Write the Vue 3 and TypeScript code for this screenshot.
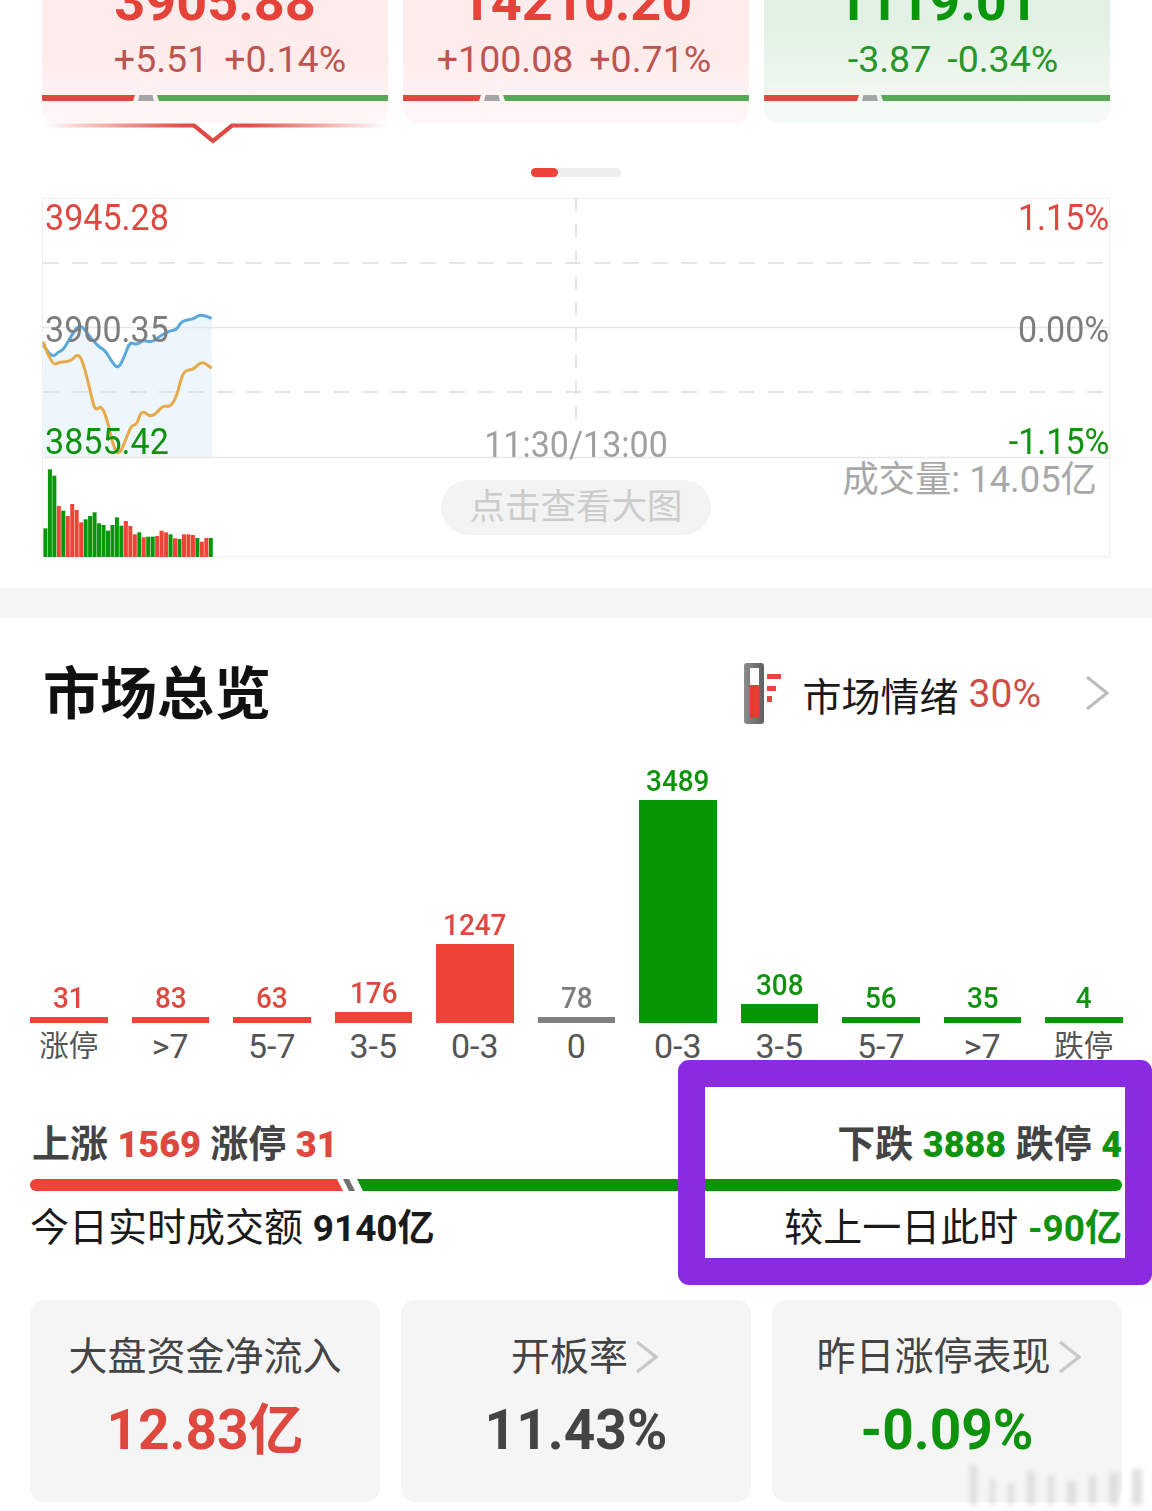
<script setup lang="ts">
interface IndexCard { value: string; change: string; pct: string; tone: string; red: number; shift: number; active?: boolean }
interface MarketBar { value: string; label: string; height: number; tone: string }
interface Tile { title: string; value: string; tone: string; arrow: boolean; shift: number }

const cards: IndexCard[] = [
  { value: '3905.88', change: '+5.51', pct: '+0.14%', tone: 'up', red: 93, shift: 30, active: true },
  { value: '14210.20', change: '+100.08', pct: '+0.71%', tone: 'up', red: 78, shift: -4 },
  { value: '1119.01', change: '-3.87', pct: '-0.34%', tone: 'down', red: 95, shift: 32 },
]

const marketBars: MarketBar[] = [
  { value: '31', label: '涨停', height: 6, tone: 'up' },
  { value: '83', label: '>7', height: 6, tone: 'up' },
  { value: '63', label: '5-7', height: 6, tone: 'up' },
  { value: '176', label: '3-5', height: 11, tone: 'up' },
  { value: '1247', label: '0-3', height: 79, tone: 'up' },
  { value: '78', label: '0', height: 6, tone: 'flat' },
  { value: '3489', label: '0-3', height: 223, tone: 'down' },
  { value: '308', label: '3-5', height: 19, tone: 'down' },
  { value: '56', label: '5-7', height: 6, tone: 'down' },
  { value: '35', label: '>7', height: 6, tone: 'down' },
  { value: '4', label: '跌停', height: 6, tone: 'down' },
]

const tiles: Tile[] = [
  { title: '大盘资金净流入', value: '12.83亿', tone: 'up', arrow: false, shift: 0 },
  { title: '开板率', value: '11.43%', tone: 'dark', arrow: true, shift: 19 },
  { title: '昨日涨停表现', value: '-0.09%', tone: 'down', arrow: true, shift: 5 },
]

const toPage = (p: number[]): number[] => [30 + p[0] / 3, 290 + p[1] / 3]

const bluePts = [[40,165],[65,205],[85,185],[100,180],[125,135],[150,100],[175,135],[205,170],[225,180],[245,215],[265,238],[285,195],[300,155],[320,165],[340,150],[365,158],[395,135],[420,122],[440,120],[455,92],[490,88],[510,72],[545,85]].map(toPage)
const orangePts = [[40,155],[65,228],[90,215],[120,215],[145,190],[160,220],[180,300],[195,365],[215,345],[235,400],[250,470],[268,498],[290,440],[305,405],[320,405],[335,358],[365,385],[400,345],[420,352],[440,320],[460,240],[490,240],[515,212],[545,235]].map(toPage)

function smooth(pts: number[][]): string {
  let d = `M${pts[0][0].toFixed(1)} ${pts[0][1].toFixed(1)}`
  for (let i = 1; i < pts.length - 1; i++) {
    const mx = (pts[i][0] + pts[i + 1][0]) / 2
    const my = (pts[i][1] + pts[i + 1][1]) / 2
    d += `Q${pts[i][0].toFixed(1)} ${pts[i][1].toFixed(1)} ${mx.toFixed(1)} ${my.toFixed(1)}`
  }
  const last = pts[pts.length - 1]
  return `${d}L${last[0].toFixed(1)} ${last[1].toFixed(1)}`
}

const blue = smooth(bluePts)
const orange = smooth(orangePts)
const blueArea = `${blue}L212 457L43 457Z`

const volTops: [number, string][] = [[715,'g'],[538,'g'],[557,'g'],[648,'r'],[662,'g'],[678,'r'],[642,'r'],[660,'r'],[697,'r'],[688,'g'],[678,'g'],[667,'g'],[700,'g'],[705,'g'],[722,'g'],[705,'g'],[682,'g'],[707,'g'],[693,'r'],[708,'r'],[733,'r'],[727,'g'],[742,'r'],[740,'g'],[740,'g'],[738,'r'],[722,'r'],[727,'r'],[733,'g'],[745,'r'],[747,'g'],[733,'r'],[733,'r'],[735,'r'],[744,'g'],[755,'r'],[744,'r'],[744,'g']]
const volumes = volTops.map(([top, c], i) => ({
  x: 43.4 + i * 4.47,
  y: 290 + top / 3,
  h: 557 - (290 + top / 3),
  fill: c === 'g' ? '#0a960a' : '#ee4336',
}))

const isCjk = (s: string): boolean => /[\u4e00-\u9fff]/.test(s)

const watermark = [
  { w: 7, h: 40 }, { w: 5, h: 26 }, { w: 6, h: 22 }, { w: 8, h: 34 }, { w: 6, h: 30 }, { w: 9, h: 24 },
  { w: 7, h: 30 }, { w: 10, h: 32 }, { w: 10, h: 36 },
]
</script>

<template>
  <div class="page">
    <div class="cards">
      <div v-for="c in cards" :key="c.value" class="card" :class="c.tone">
        <div class="card-value">{{ c.value }}</div>
        <div class="card-change" :style="{ marginLeft: c.shift + 'px' }"><span>{{ c.change }}</span><span>{{ c.pct }}</span></div>
        <div class="split">
          <i class="split-red" :style="{ width: c.red + 'px' }"></i>
          <i class="split-gray"></i>
          <i class="split-green"></i>
        </div>
        <svg v-if="c.active" class="pointer" width="346" height="24" viewBox="0 0 346 24">
          <defs>
            <linearGradient id="ptr" x1="0" x2="1" y1="0" y2="0">
              <stop offset="0" stop-color="#e0504a" stop-opacity="0" />
              <stop offset="0.4" stop-color="#e0504a" />
              <stop offset="0.6" stop-color="#e0504a" />
              <stop offset="1" stop-color="#e0504a" stop-opacity="0" />
            </linearGradient>
          </defs>
          <path d="M0 2.5H152L171 18L190 2.5H346" fill="none" stroke="url(#ptr)" stroke-width="4" />
          <path d="M152 2.5L171 18L190 2.5" fill="none" stroke="#df4a44" stroke-width="4" />
        </svg>
      </div>
    </div>

    <div class="pager"><i class="pager-on"></i></div>

    <div class="chart">
      <svg class="chart-svg" width="1068" height="359" viewBox="42 198 1068 359">
        <path :d="blueArea" fill="#eef6fd" />
        <path d="M43 263H1110M43 392H1110" stroke="#dddddd" stroke-width="1.5" stroke-dasharray="16 13" />
        <path d="M43 327.5H1110M43 457.5H1110" stroke="#e6e6e6" stroke-width="1.5" />
        <path d="M576 198V430" stroke="#dddddd" stroke-width="1.5" stroke-dasharray="14 12" />
        <path :d="blue" fill="none" stroke="#5aa7dc" stroke-width="3" stroke-linejoin="round" />
        <path :d="orange" fill="none" stroke="#e8a948" stroke-width="3" stroke-linejoin="round" />
        <rect v-for="(v, i) in volumes" :key="i" :x="v.x" :y="v.y" width="4" :height="v.h" :fill="v.fill" />
      </svg>
      <span class="axis left tl up-text">3945.28</span>
      <span class="axis right tr up-text">1.15%</span>
      <span class="axis left ml gray-text">3900.35</span>
      <span class="axis right mr gray-text">0.00%</span>
      <span class="axis left bl down-text">3855.42</span>
      <span class="axis right br down-text">-1.15%</span>
      <span class="axis time">11:30/13:00</span>
      <span class="turnover">成交量: 14.05亿</span>
      <span class="big-btn">点击查看大图</span>
    </div>

    <div class="band"></div>

    <header class="head">
      <h1 class="head-title">市场总览</h1>
      <div class="mood">
        <svg class="thermo" width="40" height="62" viewBox="0 0 40 62">
          <defs>
            <linearGradient id="tube" x1="0" x2="1" y1="0" y2="0">
              <stop offset="0" stop-color="#8c8c8c" />
              <stop offset="1" stop-color="#606060" />
            </linearGradient>
          </defs>
          <rect x="2" y="1" width="20" height="61" rx="3" fill="url(#tube)" />
          <rect x="8" y="6" width="9" height="50" fill="#ffffff" />
          <rect x="8" y="23" width="9" height="33" fill="#ea3a32" />
          <rect x="25" y="12" width="14" height="5" fill="#e5453d" />
          <rect x="25" y="24" width="9" height="5" fill="#e5453d" />
          <rect x="25" y="34" width="5" height="6" fill="#e5453d" />
        </svg>
        <span class="mood-label">市场情绪</span>
        <span class="mood-value">30%</span>
        <svg class="mood-arrow" width="26" height="36" viewBox="0 0 26 36">
          <path d="M3 2L23 18L3 34" fill="none" stroke="#bdbdbd" stroke-width="3.2" />
        </svg>
      </div>
    </header>

    <div class="dist">
      <div v-for="(b, i) in marketBars" :key="i" class="dist-col">
        <span class="dist-value" :class="b.tone + '-text'">{{ b.value }}</span>
        <i class="dist-bar" :class="b.tone + '-bg'" :style="{ height: b.height + 'px' }"></i>
      </div>
    </div>
    <div class="dist-labels">
      <span v-for="(b, i) in marketBars" :key="i" :class="{ cjk: isCjk(b.label) }">{{ b.label }}</span>
    </div>

    <div class="stats">
      <div>上涨 <b class="up-text">1569</b> 涨停 <b class="up-text">31</b></div>
      <div>下跌 <b class="down-text">3888</b> 跌停 <b class="down-text">4</b></div>
    </div>
    <div class="ratio">
      <i class="ratio-red"></i>
      <i class="ratio-gray"></i>
      <i class="ratio-green"></i>
    </div>
    <div class="turn">
      <div>今日实时成交额 <b>9140亿</b></div>
      <div>较上一日此时 <b class="down-text">-90亿</b></div>
    </div>

    <div class="tiles">
      <div v-for="t in tiles" :key="t.title" class="tile">
        <div class="tile-title" :style="{ marginLeft: t.shift + 'px' }">
          {{ t.title }}
          <svg v-if="t.arrow" class="tile-arrow" width="26" height="34" viewBox="0 0 26 34">
            <path d="M3 2L22 17L3 32" fill="none" stroke="#c8c8c8" stroke-width="3.4" />
          </svg>
        </div>
        <div class="tile-value" :class="t.tone + '-text'">{{ t.value }}</div>
      </div>
    </div>

    <div class="highlight"></div>
    <div class="watermark">
      <i v-for="(m, i) in watermark" :key="i" :style="{ width: m.w + 'px', height: m.h + 'px' }"></i>
    </div>
  </div>
</template>

<style>
html, body { margin: 0; background: #fff; }
</style>

<style scoped>
.page {
  position: relative;
  width: 1152px;
  height: 1511px;
  overflow: hidden;
  background: #fff;
  font-family: Roboto, "Noto Sans CJK SC", sans-serif;
  color: #1a1a1a;
}
i { display: block; }
.up-text { color: #e0483f; }
.down-text { color: #0f930f; }
.gray-text, .flat-text { color: #7d7d7d; }
.dark-text { color: #444; }
.up-bg { background: #ee4336; }
.down-bg { background: #069606; }
.flat-bg { background: #808080; }

.cards {
  display: grid;
  grid-template-columns: repeat(3, 346px);
  gap: 15px;
  padding: 0 42px;
  margin-top: -40px;
}
.card {
  position: relative;
  height: 163px;
  border-radius: 0 0 14px 14px;
  text-align: center;
}
.card.up { background: linear-gradient(#feecec 60%, #fff7f7); color: #e5423a; }
.card.down { background: linear-gradient(#e2f1e3 40%, #f7fbf7); color: #0a960a; }
.card-value {
  height: 74px;
  line-height: 84px;
  font-size: 54px;
  font-weight: 700;
}
.card-change {
  display: flex;
  justify-content: center;
  gap: 16px;
  height: 42px;
  margin-top: 4px;
  line-height: 42px;
  font-size: 37.5px;
}
.card.up .card-change { color: #bd5550; }
.card.down .card-change { color: #27962a; }
.split {
  display: flex;
  height: 6px;
  margin-top: 15px;
  gap: 3px;
}
.split-red { background: #de4a40; clip-path: polygon(0 0, 100% 0, calc(100% - 2px) 100%, 0 100%); }
.split-gray { width: 16px; background: #a5a5a5; clip-path: polygon(1.5px 0, calc(100% - 1.5px) 0, 100% 100%, 0 100%); }
.split-green { flex: 1; background: #57a957; clip-path: polygon(0 0, 100% 0, 100% 100%, 2px 100%); }
.pointer { position: absolute; left: 0; top: 163px; }

.pager {
  width: 90px;
  height: 9px;
  margin: 45px auto 0;
  border-radius: 5px;
  background: #eeeeee;
}
.pager-on { width: 27px; height: 9px; border-radius: 5px; background: #ea4238; }

.chart {
  position: relative;
  box-sizing: border-box;
  width: 1068px;
  height: 359px;
  margin: 21px 0 0 42px;
  border: 1px solid #eeeeee;
}
.chart-svg { position: absolute; left: -1px; top: -1px; }
.axis {
  position: absolute;
  height: 40px;
  line-height: 40px;
  font-size: 37px;
  white-space: nowrap;
  transform: scaleX(0.92);
}
.axis.left { transform-origin: left center; }
.axis.right { transform-origin: right center; }
.tl { left: 2px; top: -1px; }
.tr { right: 0; top: -1px; }
.ml { left: 2px; top: 111px; }
.mr { right: 0; top: 111px; }
.bl { left: 2px; top: 223px; }
.br { right: 0; top: 223px; }
.time { left: 0; right: 0; top: 226px; text-align: center; color: #a0a0a0; }
.turnover {
  position: absolute;
  right: 12px;
  top: 261px;
  height: 40px;
  line-height: 40px;
  font-size: 36.4px;
  white-space: nowrap;
  color: #a8a8a8;
}
.big-btn {
  position: absolute;
  left: 398px;
  top: 281px;
  width: 270px;
  height: 55px;
  line-height: 55px;
  border-radius: 28px;
  background: #f3f3f3;
  color: #cccccc;
  font-size: 35.5px;
  text-align: center;
}

.band { height: 30px; margin-top: 31px; background: #f5f5f5; }

.head {
  display: flex;
  align-items: center;
  justify-content: space-between;
  height: 62px;
  padding: 44px 42px 0 43px;
}
.head-title { margin: -8px 0 0; font-size: 57px; font-weight: 700; color: #111; }
.mood { display: flex; align-items: center; }
.thermo { margin-right: 21px; }
.mood-label { margin-top: 1px; font-size: 39px; color: #1a1a1a; }
.mood-value { margin: 1px 0 0 10px; font-size: 39px; font-weight: 400; color: #cf4e48; }
.mood-arrow { margin-left: 43px; }

.dist {
  display: grid;
  grid-template-columns: repeat(11, 77.5px);
  column-gap: 24px;
  align-items: end;
  height: 299px;
  padding: 0 30px;
}
.dist-col { display: flex; flex-direction: column; align-items: stretch; text-align: center; }
.dist-value {
  height: 32px;
  line-height: 32px;
  margin-bottom: 3px;
  font-size: 30px;
  font-weight: 500;
  transform: scaleX(0.93);
}
.dist-labels {
  display: grid;
  grid-template-columns: repeat(11, 77.5px);
  column-gap: 24px;
  height: 46px;
  padding: 0 30px;
  line-height: 46px;
  font-size: 34px;
  text-align: center;
  color: #555;
}
.dist-labels .cjk { font-size: 29.5px; }

.stats {
  display: flex;
  justify-content: space-between;
  height: 46px;
  margin-top: 52px;
  padding: 0 30px 0 32px;
  line-height: 46px;
  font-size: 38px;
  font-weight: 700;
  color: #444;
}
.stats b { font-size: 36px; }
.ratio {
  display: flex;
  gap: 3px;
  height: 12px;
  margin: 12px 30px 0;
}
.ratio-red { width: 313px; background: #ee4336; border-radius: 6px 0 0 6px; clip-path: polygon(0 0, calc(100% - 6px) 0, 100% 100%, 0 100%); }
.ratio-gray { width: 12px; margin-left: -3px; background: #707070; clip-path: polygon(0 0, 6px 0, 100% 100%, 6px 100%); }
.ratio-green { flex: 1; margin-left: -1px; background: #069606; border-radius: 0 6px 6px 0; clip-path: polygon(0 0, 100% 0, 100% 100%, 6px 100%); }
.turn {
  display: flex;
  justify-content: space-between;
  height: 46px;
  margin-top: 14px;
  padding: 0 30px;
  line-height: 46px;
  font-size: 39px;
  color: #1a1a1a;
}
.turn b { font-size: 37px; }

.tiles {
  display: grid;
  grid-template-columns: repeat(3, 350px);
  gap: 21px;
  margin-top: 49px;
  padding: 0 30px;
}
.tile {
  box-sizing: border-box;
  height: 202px;
  padding-top: 37px;
  border-radius: 14px;
  background: #f5f5f5;
  text-align: center;
}
.tile-title {
  display: flex;
  justify-content: center;
  align-items: center;
  height: 40px;
  line-height: 40px;
  font-size: 39px;
  color: #444;
}
.tile-arrow { margin-left: 6px; }
.tile-value {
  height: 60px;
  margin-top: 23px;
  line-height: 60px;
  font-size: 55px;
  font-weight: 700;
}

.highlight {
  position: absolute;
  left: 678px;
  top: 1060px;
  box-sizing: border-box;
  width: 474px;
  height: 225px;
  border: 27px solid #8a2be2;
  border-radius: 11px;
}
.watermark {
  position: absolute;
  left: 970px;
  top: 1465px;
  display: flex;
  align-items: flex-end;
  gap: 13px;
  height: 40px;
  filter: blur(2.5px);
  opacity: 0.75;
}
.watermark i { background: #d6d6d6; }
</style>
